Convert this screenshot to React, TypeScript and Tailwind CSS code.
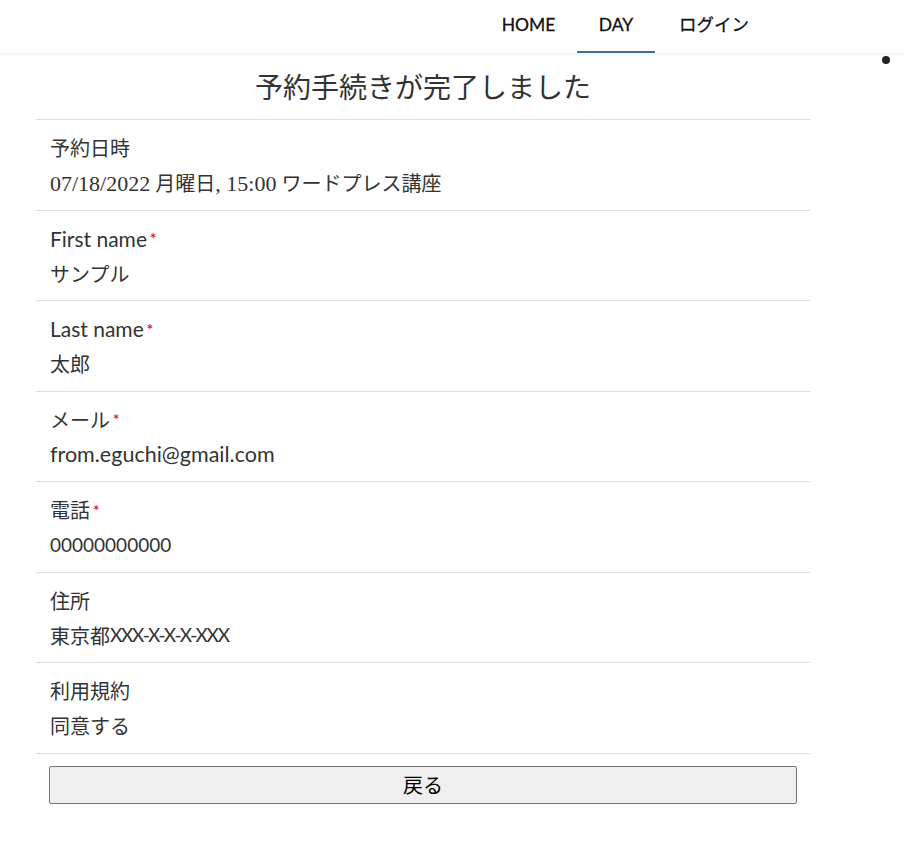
import React from "react";

const serif = { fontFamily: '"Liberation Serif", "Noto Sans CJK JP", serif' };

const rows: { label: React.ReactNode; value: React.ReactNode; req?: boolean; key: string }[] = [
  {
    key: "date",
    label: "予約日時",
    value: (
      <>
        <span className="text-[22px]" style={serif}>07/18/2022</span> 月曜日
        <span className="text-[22px]" style={serif}>, 15:00</span> ワードプレス講座
      </>
    ),
  },
  { key: "fn", label: <span className="text-[21px]">First name</span>, value: "サンプル", req: true },
  { key: "ln", label: <span className="text-[21px]">Last name</span>, value: "太郎", req: true },
  { key: "mail", label: "メール", value: <span className="text-[21.5px]">from.eguchi@gmail.com</span>, req: true },
  { key: "tel", label: "電話", value: <span className="text-[19px]">00000000000</span>, req: true },
  {
    key: "addr",
    label: "住所",
    value: (
      <>
        東京都<span className="text-[19px] tracking-[-1.3px]">XXX-X-X-X-XXX</span>
      </>
    ),
  },
  { key: "terms", label: "利用規約", value: "同意する" },
];

export default function App() {
  return (
    <div
      className="min-h-[842px] bg-white text-[#333]"
      style={{ fontFamily: 'Lato, "Noto Sans CJK JP", sans-serif' }}
    >
      <header className="relative h-[53px] bg-white shadow-[0_1px_3px_rgba(0,0,0,0.07)]">
        <nav className="flex h-full items-stretch pl-[480px]">
          <a className="flex h-full w-[97px] items-center justify-center pb-[2px] text-[17.5px] text-[#111] [-webkit-text-stroke:0.3px_#111]">HOME</a>
          <a className="flex h-full w-[78px] items-center justify-center border-b-2 border-[#3f7193] pb-[0px] text-[17.5px] text-[#111] [-webkit-text-stroke:0.3px_#111]">DAY</a>
          <a className="flex h-full w-[118px] items-center justify-center pb-[2px] text-[17.5px] text-[#111] [-webkit-text-stroke:0.3px_#111]">ログイン</a>
        </nav>
        <span className="absolute left-[882px] top-[56px] h-[8px] w-[8px] rounded-full bg-[#222]" />
      </header>
      <main className="ml-[36px] w-[774px]">
        <h1 className="pt-[14px] pb-[12px] text-center text-[28px] leading-[40px] text-[#333]">
          予約手続きが完了しました
        </h1>
        <div className="border-t border-[#ddd]">
          {rows.map((r) => (
            <div key={r.key} className="border-b border-[#ddd] px-[14px] pt-[12px] pb-[10.5px]">
              <div className="flex h-[32px] items-center text-[20px] text-[#333]">
                {r.label}
                {r.req && <span className="ml-[3px] text-[15px] font-bold text-[#d9261c]">*</span>}
              </div>
              <div className="mt-[3px] flex h-[32px] items-center whitespace-pre text-[20px] text-[#333]">{r.value}</div>
            </div>
          ))}
        </div>
        <div className="px-[13px] pt-[12px]">
          <button className="h-[38px] w-full rounded-[2px] border border-[#767676] bg-[#efefef] text-[20px] text-black">
            戻る
          </button>
        </div>
      </main>
    </div>
  );
}
